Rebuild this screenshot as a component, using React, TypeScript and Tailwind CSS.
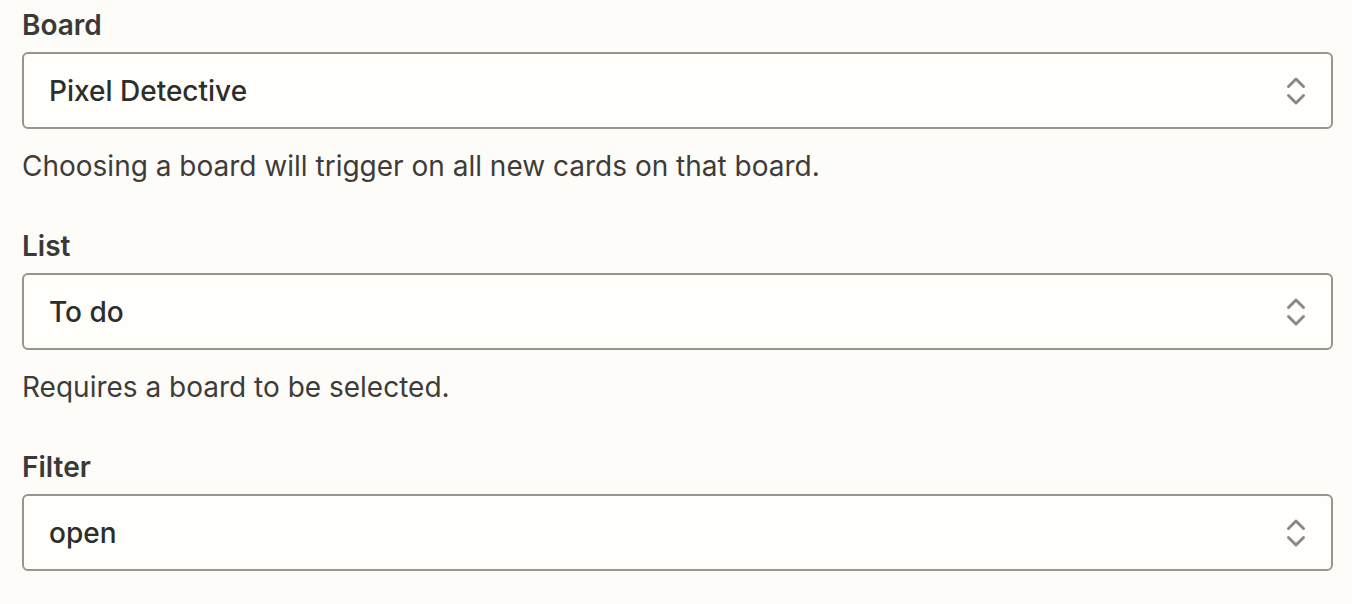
import React from "react";

function Chevrons() {
  return (
    <svg width="20" height="32" viewBox="0 0 20 32" fill="none" className="shrink-0">
      <path d="M2.5 11.5 L10 4 L17.5 11.5" stroke="#8a8986" strokeWidth="3" strokeLinecap="round" strokeLinejoin="round" />
      <path d="M2.5 20.5 L10 28 L17.5 20.5" stroke="#8a8986" strokeWidth="3" strokeLinecap="round" strokeLinejoin="round" />
    </svg>
  );
}

function Field({ label, value, help, last }: { label: string; value: string; help?: string; last?: boolean }) {
  return (
    <div className={last ? "" : "mb-[44px]"}>
      <div className="h-[36px] leading-[36px] text-[28px] font-semibold text-[#3a3937]">{label}</div>
      <div className="mt-[9px] h-[77px] border-2 border-[#979590] rounded-[6px] flex items-center justify-between pl-[25px] pr-[25px] bg-[#fffefb]">
        <span className="text-[28px] font-medium text-[#2d2d2c]">{value}</span>
        <Chevrons />
      </div>
      {help && <div className="mt-[19px] h-[36px] leading-[36px] text-[28px] text-[#3d3c3a]">{help}</div>}
    </div>
  );
}

export default function App() {
  return (
    <div className="w-[1352px] h-[604px] bg-[#fdfcf8] pt-[7px] pl-[22px] pr-[19px] overflow-hidden" style={{ fontFamily: "Inter, 'Noto Sans', sans-serif" }}>
      <Field label="Board" value="Pixel Detective" help="Choosing a board will trigger on all new cards on that board." />
      <Field label="List" value="To do" help="Requires a board to be selected." />
      <Field label="Filter" value="open" last />
    </div>
  );
}
